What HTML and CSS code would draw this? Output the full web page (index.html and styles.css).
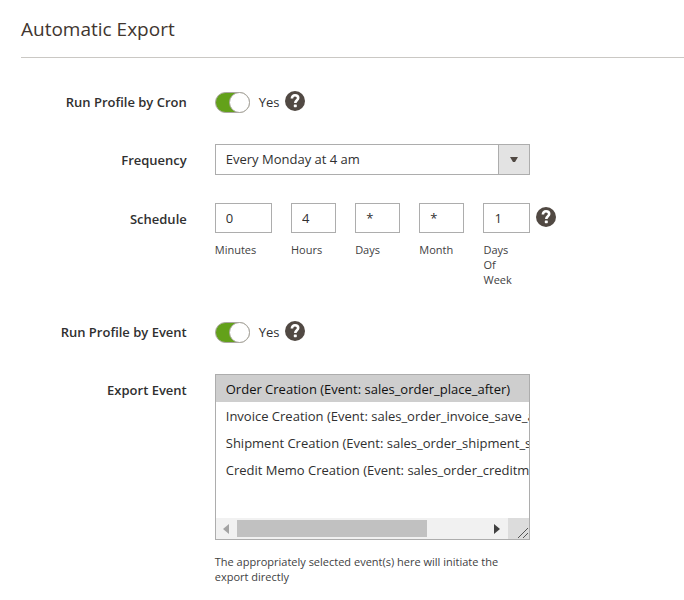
FILE: index.html
```html
<!DOCTYPE html>
<html lang="en">
<head>
<meta charset="utf-8">
<meta name="viewport" content="width=device-width, initial-scale=1">
<title>Automatic Export</title>
<link rel="stylesheet" href="styles.css">
</head>
<body>
<svg class="sprite" aria-hidden="true">
  <symbol id="icon-help" viewBox="0 0 20 20">
    <circle cx="10" cy="10" r="10" fill="#514943"/>
    <path d="M6.9 7.6C6.9 5.4 8.2 4.3 10 4.3C11.9 4.3 13.2 5.4 13.2 7.1C13.2 9.3 10.3 9.3 10.3 12" fill="none" stroke="#fff" stroke-width="2.6"/>
    <rect x="8.8" y="13.4" width="3" height="2.8" rx="0.6" fill="#fff"/>
  </symbol>
</svg>
<main class="section">
  <h1 class="section-title">Automatic Export</h1>
  <form class="fields">
    <div class="field field-toggle">
      <label class="field-label" for="cron">Run Profile by Cron</label>
      <div class="toggle-control">
        <input class="toggle" type="checkbox" id="cron" checked>
        <span class="toggle-text">Yes</span>
        <button class="help" type="button" aria-label="Help"><svg class="help-icon"><use href="#icon-help"/></svg></button>
      </div>
    </div>

    <div class="field">
      <label class="field-label" for="frequency">Frequency</label>
      <div class="dropdown">
        <select class="dropdown-select" id="frequency">
          <option>Every Monday at 4 am</option>
        </select>
        <span class="dropdown-button"><svg class="caret" viewBox="0 0 8 5"><path d="M0 0H8L5 5H3Z" fill="#514943"/></svg></span>
      </div>
    </div>

    <div class="field">
      <label class="field-label" for="minutes">Schedule</label>
      <div class="schedule">
        <div class="schedule-part"><input class="text-input" id="minutes" type="text" value="0"><label class="note" for="minutes">Minutes</label></div>
        <div class="schedule-part"><input class="text-input" id="hours" type="text" value="4"><label class="note" for="hours">Hours</label></div>
        <div class="schedule-part"><input class="text-input" id="days" type="text" value="*"><label class="note" for="days">Days</label></div>
        <div class="schedule-part"><input class="text-input" id="month" type="text" value="*"><label class="note" for="month">Month</label></div>
        <div class="schedule-part"><input class="text-input" id="weekdays" type="text" value="1"><label class="note" for="weekdays">Days Of Week</label></div>
      </div>
      <button class="help help-aside" type="button" aria-label="Help"><svg class="help-icon"><use href="#icon-help"/></svg></button>
    </div>

    <div class="field field-toggle">
      <label class="field-label" for="event">Run Profile by Event</label>
      <div class="toggle-control">
        <input class="toggle" type="checkbox" id="event" checked>
        <span class="toggle-text">Yes</span>
        <button class="help" type="button" aria-label="Help"><svg class="help-icon"><use href="#icon-help"/></svg></button>
      </div>
    </div>

    <div class="field">
      <label class="field-label" for="export-event">Export Event</label>
      <div>
        <div class="listbox">
          <select class="listbox-select" id="export-event" multiple>
            <option selected>Order Creation (Event: sales_order_place_after)</option>
            <option>Invoice Creation (Event: sales_order_invoice_save_after)</option>
            <option>Shipment Creation (Event: sales_order_shipment_save_after)</option>
            <option>Credit Memo Creation (Event: sales_order_creditmemo_save_after)</option>
          </select>
          <div class="scrollbar" aria-hidden="true">
            <span class="scroll-arrow"><svg class="arrow" viewBox="0 0 6 10"><path d="M6 0V10L0 5Z" fill="#a3a3a3"/></svg></span>
            <span class="scroll-track"><span class="scroll-thumb"></span></span>
            <span class="scroll-arrow"><svg class="arrow" viewBox="0 0 6 10"><path d="M0 0V10L6 5Z" fill="#404040"/></svg></span>
            <span class="resizer"><svg class="grip" viewBox="0 0 10 10"><path d="M0 10L10 0M5 10L10 5" stroke="#555" fill="none"/></svg></span>
          </div>
        </div>
        <p class="note field-note">The appropriately selected event(s) here will initiate the export directly</p>
      </div>
    </div>
  </form>
</main>
</body>
</html>
```

FILE: styles.css
```css
* {
  box-sizing: border-box;
}

body {
  margin: 0;
  background: #fff;
  color: #303030;
  font: 13px/18px "Open Sans", "Noto Sans", sans-serif;
}

input,
select,
button {
  margin: 0;
  font: inherit;
  color: inherit;
}

.sprite {
  display: none;
}

.section {
  padding: 16px 0 16px 21px;
}

.section-title {
  margin: 0 0 29px;
  padding-bottom: 15px;
  border-bottom: 1px solid #cac8c4;
  color: #41362f;
  font-size: 19px;
  font-weight: 400;
  line-height: 26px;
}

.field {
  display: grid;
  grid-template-columns: 25% 47.5% 1fr;
  column-gap: 28px;
  margin-bottom: 28px;
}

.field-toggle {
  margin-bottom: 26px;
}

.field-label {
  padding-top: 7px;
  text-align: right;
  font-weight: 600;
}

.field-toggle .field-label {
  padding-top: 6px;
}

.toggle-control {
  display: flex;
  align-items: center;
  height: 31px;
}

.toggle {
  appearance: none;
  display: flex;
  flex: none;
  width: 35px;
  height: 21px;
  border: 1px solid #aaa6a0;
  border-radius: 11px;
  background: #e3e3e3;
}

.toggle::before {
  content: "";
  box-sizing: border-box;
  width: 21px;
  height: 21px;
  margin: -1px;
  border: 1px solid #aaa6a0;
  border-radius: 50%;
  background: #fff;
}

.toggle:checked {
  background: #63a11a;
}

.toggle:checked::before {
  margin-left: auto;
}

.toggle-text {
  margin: 0 5px 0 9px;
  padding-bottom: 1px;
}

.help {
  width: 20px;
  height: 20px;
  padding: 0;
  border: 0;
  background: none;
}

.toggle-control .help {
  margin-bottom: 3px;
}

.help-aside {
  margin: 4px 0 0 -22px;
}

.help-icon {
  display: block;
  width: 20px;
  height: 20px;
}

.dropdown {
  display: grid;
  grid-template-columns: 1fr 32px;
}

.dropdown-select {
  appearance: none;
  grid-area: 1 / 1 / 2 / 3;
  width: 100%;
  height: 31px;
  padding: 0 42px 1px 10px;
  border: 1px solid #adadad;
  border-radius: 0;
  background: #fff;
}

.dropdown-button {
  grid-area: 1 / 2;
  display: grid;
  place-items: center;
  border: 1px solid #adadad;
  background: #e3e3e3;
  pointer-events: none;
}

.caret {
  width: 8px;
  height: 5px;
}

.schedule {
  display: grid;
  grid-template-columns: 57fr 45fr 45fr 45fr 46fr;
  column-gap: 19px;
}

.schedule-part {
  display: flex;
  flex-direction: column;
  min-width: 0;
}

.schedule-part .note {
  padding-right: 8px;
}

.schedule-part:first-child .note,
.schedule-part:nth-child(4) .note {
  padding-right: 0;
}

.text-input {
  width: 100%;
  height: 30px;
  padding: 0 10px 1px;
  border: 1px solid #adadad;
  border-radius: 0;
  background: #fff;
}

.note {
  margin: 9px 0 0;
  padding-bottom: 2px;
  color: #41413f;
  font-size: 11px;
  line-height: 15px;
}

.field-note {
  margin-top: 14px;
}

.listbox {
  border: 1px solid #adadad;
}

.listbox-select {
  display: block;
  width: 100%;
  height: 143px;
  padding: 0;
  border: 0;
  border-radius: 0;
  background: #fff;
  overflow: hidden;
  outline: 0;
}

.listbox-select option {
  min-height: 27px;
  padding: 5px 10px 4px;
  line-height: 18px;
}

.scrollbar {
  display: flex;
  height: 21px;
  background: #f1f1f1;
}

.scroll-arrow,
.resizer {
  display: grid;
  flex: none;
  width: 21px;
  place-items: center;
}

.scroll-track {
  flex: 1;
  padding: 2px 0;
}

.scroll-thumb {
  display: block;
  width: 76%;
  height: 17px;
  background: #c1c1c1;
}

.arrow {
  width: 6px;
  height: 10px;
}

.resizer {
  place-items: end;
  padding: 1px;
  background: #dcdcdc;
}

.grip {
  width: 10px;
  height: 10px;
}
```
